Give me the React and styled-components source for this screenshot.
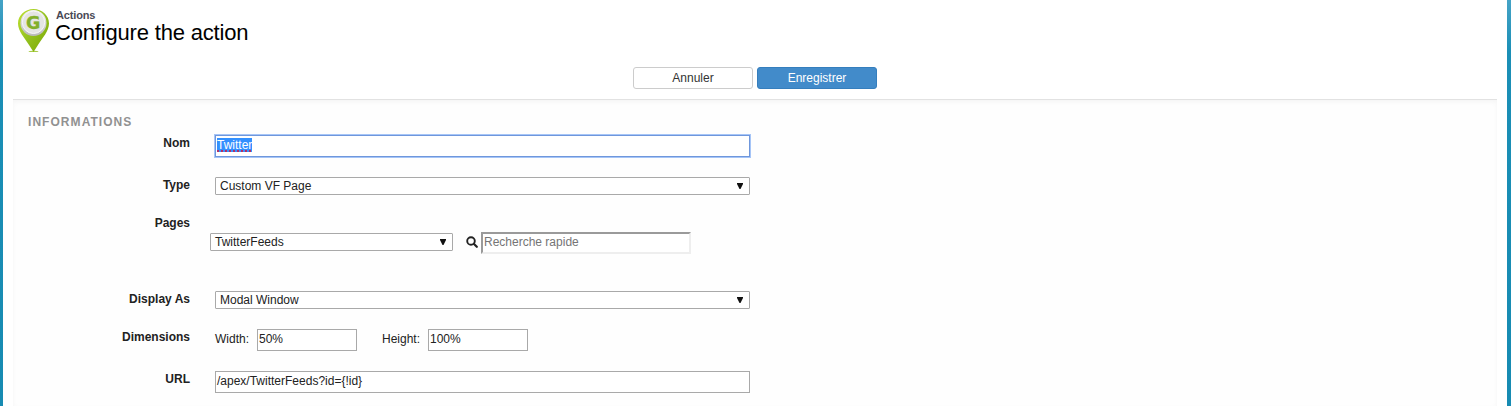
import React from "react";
import styled, { createGlobalStyle } from "styled-components";

const GlobalStyle = createGlobalStyle`
  * { box-sizing: border-box; }
  body {
    margin: 0;
    overflow: hidden;
    background: #1a8fb5;
    color: #222;
    font: 12px/16px "Liberation Sans", Arial, sans-serif;
  }
`;

const Backdrop = styled.div`
  height: 406px;
  padding: 0 4px 0 3px;
  background: linear-gradient(#45a3c6, #1b8fb6 52px, #178bb2);
`;

const Page = styled.div`
  height: 406px;
  padding: 0 10px;
  background: #fff;
`;

const Header = styled.header`
  display: flex;
  height: 67px;
  padding: 8px 0 0 4px;
`;

const Titles = styled.div`
  padding-left: 6px;
`;

const Kicker = styled.div`
  padding-left: 1px;
  color: #4a4a56;
  font-size: 11px;
  font-weight: bold;
  line-height: 14px;
  letter-spacing: -0.15px;
`;

const Title = styled.h1`
  margin: 0;
  color: #000;
  font-size: 22px;
  font-weight: normal;
  line-height: 22px;
  letter-spacing: -0.18px;
`;

const Buttons = styled.div`
  display: flex;
  justify-content: center;
  gap: 4px;
  height: 32px;
`;

const Button = styled.button`
  width: 120px;
  height: 22px;
  padding: 0 0 1px;
  border: 1px solid ${(p) => (p.$primary ? "#357ebd" : "#ccc")};
  border-radius: 3px;
  background: ${(p) => (p.$primary ? "#428bca" : "#fff")};
  color: ${(p) => (p.$primary ? "#fff" : "#333")};
  font: inherit;
`;

const Panel = styled.section`
  height: 307px;
  padding: 14px 15px 0;
  border-top: 1px solid #e2e2e2;
  background: #fefefe;
  box-shadow: inset 0 2px 5px rgba(0, 0, 0, 0.04);
`;

const SectionTitle = styled.h2`
  height: 21px;
  margin: 0;
  color: #919191;
  font-size: 12px;
  line-height: 16px;
  letter-spacing: 1.05px;
`;

const Row = styled.div`
  display: grid;
  grid-template-columns: 162px 535px;
  column-gap: 25px;
  align-items: start;
  height: ${(p) => p.$height}px;
`;

const Label = styled.label`
  font-weight: bold;
  text-align: right;
`;

const Field = styled.div`
  display: flex;
  align-items: center;
  width: ${(p) => p.$width || "100%"};
  height: 22px;
  padding: 0 1px 2px;
  border: 1px solid #a9a9a9;
  background: #fff;
`;

const FocusedField = styled(Field)`
  border-color: #6f97dc;
  box-shadow: 0 0 0 1px #a6c5f7;
`;

const Selected = styled.span`
  height: 14px;
  background: #3390ff;
  color: #fff;
  line-height: 14px;
  text-decoration: underline dotted #b0306a 1.5px;
  text-decoration-skip-ink: none;
  text-underline-offset: 1px;
`;

const SelectBox = styled.div`
  display: flex;
  align-items: center;
  justify-content: space-between;
  width: ${(p) => p.$width || "100%"};
  height: 18px;
  padding: 0 6px 0 4px;
  border: 1px solid #a9a9a9;
  border-radius: 1px;
  background: #fff;
`;

const Arrow = styled.svg`
  width: 6px;
  height: 6px;
  margin-bottom: 1px;
`;

const PageTools = styled.div`
  display: flex;
  align-items: flex-start;
  margin: 17px 0 0 -5px;
`;

const PageSelect = styled(SelectBox)`
  margin-top: 1px;
`;

const SearchIcon = styled.svg`
  width: 12px;
  height: 12px;
  margin: 4px 3px 0 13px;
`;

const SearchField = styled.div`
  width: 210px;
  height: 22px;
  padding: 0 1px;
  border: 2px solid;
  border-color: #9a9a9a #eee #eee #9a9a9a;
  background: #fff;
  color: #757575;
`;

const Dimensions = styled.div`
  display: flex;
  align-items: center;
`;

const Caption = styled.span`
  width: ${(p) => p.$width}px;
  margin-left: ${(p) => p.$offset || 0}px;
  padding-bottom: 2px;
`;

function PinLogo() {
  return (
    <svg width="32" height="45" viewBox="0 0 32 45">
      <defs>
        <linearGradient id="pin" x1="0" y1="0" x2="1" y2="1">
          <stop offset="0" stopColor="#bfe22f" />
          <stop offset="0.5" stopColor="#94c11f" />
          <stop offset="1" stopColor="#78a600" />
        </linearGradient>
        <linearGradient id="disc" x1="0" y1="0" x2="0" y2="1">
          <stop offset="0" stopColor="#f5f5f5" />
          <stop offset="1" stopColor="#b9b9b9" />
        </linearGradient>
      </defs>
      <ellipse cx="16.5" cy="43.4" rx="5" ry="0.7" fill="#a9cc48" />
      <path d="M16.5 1C7.8 1 1 7.4 1 15.600c0 7.600 6.500 14.200 11.200 21.700L16.500 44l4.300-6.700C25.500 29.800 32 23.200 32 15.600 32 7.400 25.200 1 16.500 1Z" fill="url(#pin)" />
      <circle cx="16.5" cy="15" r="13" fill="url(#disc)" />
      <circle cx="16.5" cy="14.3" r="11.2" fill="#e4e5e3" stroke="#f7f7f7" strokeWidth="1" />
      <text x="16.2" y="20.8" textAnchor="middle" fill="#82b02b" stroke="#82b02b" strokeWidth="0.3" fontFamily="DejaVu Sans" fontWeight="bold" fontSize="17.5">G</text>
    </svg>
  );
}

function Select({ value, as: Box = SelectBox, width }) {
  return (
    <Box $width={width}>
      <span>{value}</span>
      <Arrow viewBox="0 0 6 6">
        <path d="M0 0h6v1L3.5 6h-1L0 1Z" fill="#111" />
      </Arrow>
    </Box>
  );
}

export default function App() {
  return (
    <Backdrop>
      <GlobalStyle />
      <Page>
        <Header>
          <PinLogo />
          <Titles>
            <Kicker>Actions</Kicker>
            <Title>Configure the action</Title>
          </Titles>
        </Header>
        <Buttons>
          <Button>Annuler</Button>
          <Button $primary>Enregistrer</Button>
        </Buttons>
        <Panel>
          <SectionTitle>INFORMATIONS</SectionTitle>
          <Row $height={42}>
            <Label>Nom</Label>
            <FocusedField><Selected>Twitter</Selected></FocusedField>
          </Row>
          <Row $height={38}>
            <Label>Type</Label>
            <Select value="Custom VF Page" />
          </Row>
          <Row $height={76}>
            <Label>Pages</Label>
            <PageTools>
              <Select as={PageSelect} value="TwitterFeeds" width="243px" />
              <SearchIcon viewBox="0 0 12 12">
                <circle cx="5" cy="5" r="3.8" fill="none" stroke="#222" strokeWidth="1.9" />
                <path d="m7.8 7.8 3 3" stroke="#222" strokeWidth="2.2" strokeLinecap="round" />
              </SearchIcon>
              <SearchField>Recherche rapide</SearchField>
            </PageTools>
          </Row>
          <Row $height={38}>
            <Label>Display As</Label>
            <Select value="Modal Window" />
          </Row>
          <Row $height={42}>
            <Label>Dimensions</Label>
            <Dimensions>
              <Caption $width={42}>Width:</Caption>
              <Field $width="100px">50%</Field>
              <Caption $width={46} $offset={25}>Height:</Caption>
              <Field $width="100px">100%</Field>
            </Dimensions>
          </Row>
          <Row $height={35}>
            <Label>URL</Label>
            <Field>{"/apex/TwitterFeeds?id={!id}"}</Field>
          </Row>
        </Panel>
      </Page>
    </Backdrop>
  );
}
